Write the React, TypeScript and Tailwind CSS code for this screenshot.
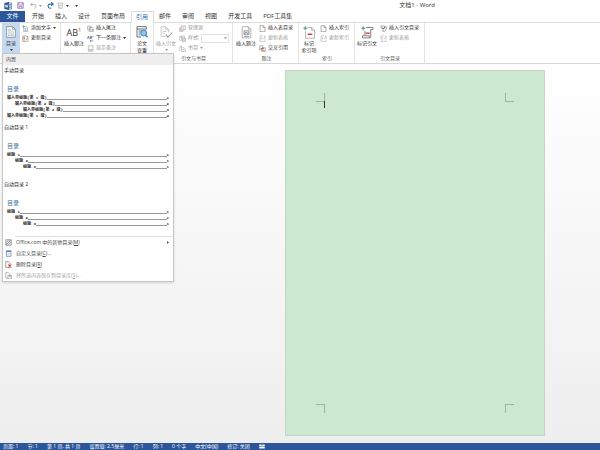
import React from 'react';
import clsx from 'clsx';

type IconName =
  | 'addText'
  | 'refresh'
  | 'endnote'
  | 'nextNote'
  | 'showNotes'
  | 'sources'
  | 'style'
  | 'biblio'
  | 'page'
  | 'pageRefresh'
  | 'crossRef'
  | 'authorities';

const smallIcons: Record<IconName, React.ReactNode> = {
  addText: (
    <>
      <path d="M5 5h8l3 3v11H5z" fill="#fff" stroke="#777" strokeWidth="1.5" />
      <path d="M8 11h5M8 15h5" stroke="#4a7ebb" strokeWidth="2" />
      <path d="M4 1v7M1 4h7" stroke="#5f9f7f" strokeWidth="2" />
    </>
  ),
  refresh: (
    <>
      <path d="M2 3h11l4 4v12H2z" fill="#fff" stroke="#777" strokeWidth="1.5" />
      <path d="M6 5v8M6 16v2" stroke="#d2402f" strokeWidth="3" />
      <path d="M11 15l5-7M13 3l5 3" stroke="#777" strokeWidth="2" />
    </>
  ),
  endnote: (
    <>
      <path d="M2 3h9v11H2zM7 7h8l3 3v9H7z" fill="#fff" stroke="#777" strokeWidth="1.5" />
      <path d="M15 12v5" stroke="#4a7ebb" strokeWidth="2" />
    </>
  ),
  nextNote: (
    <>
      <path d="M1 11L4 3l3 8M2 8h4M9 3v8h3a2 2 0 0 0 0-4H9h2a2 2 0 0 0 0-4z" fill="none" stroke="#555" strokeWidth="1.5" />
      <path d="M17 2v5M9 17h9M12 14l-3 3 3 3" fill="none" stroke="#4a7ebb" strokeWidth="2" />
    </>
  ),
  showNotes: <path d="M4 2h13v16H4zM2 13h15M7 16h7" fill="#fafafa" stroke="#999" strokeWidth="1.5" />,
  sources: (
    <path d="M7 2h11v11H7zM4 5v11h11M2 8v11h10M10 6h5M10 9h5" fill="none" stroke="#999" strokeWidth="1.5" />
  ),
  style: (
    <>
      <path d="M2 3h14v12H2zM2 7h14M7 3v12" fill="none" stroke="#a5a5a5" strokeWidth="1.5" />
      <path d="M10 10h9v9h-9z" fill="#ddd" stroke="#999" strokeWidth="1.5" />
    </>
  ),
  biblio: (
    <path d="M2 18V6l5-4v6M7 8h7l4 4v7H7zM10 13h5" fill="none" stroke="#999" strokeWidth="1.5" />
  ),
  page: <path d="M3 2h9l5 5v12H3zM12 2v5h5" fill="#fff" stroke="#666" strokeWidth="1.5" />,
  pageRefresh: (
    <path d="M3 2h8M3 2v17h14V9M7 5v8M7 16v1M12 12l5-8M14 3l4 1-1 4" fill="none" stroke="#a5a5a5" strokeWidth="1.5" />
  ),
  crossRef: (
    <>
      <path d="M2 2h9v12H2zM8 8h10v11H8z" fill="#fff" stroke="#777" strokeWidth="1.5" />
      <path d="M4 10h8M10 7l3 3-3 3M11 16h5" fill="none" stroke="#c64545" strokeWidth="2" />
    </>
  ),
  authorities: (
    <>
      <path d="M2 3h12v6H4zM14 5h4v6l-5 7H7l3-5" fill="#fff" stroke="#666" strokeWidth="1.5" />
      <path d="M6 8l3 4 5-6" fill="none" stroke="#555" strokeWidth="2" />
    </>
  ),
};

function SmallIcon({ name }: { name: IconName }) {
  return (
    <svg viewBox="0 0 20 20" className="size-[7px] shrink-0">
      {smallIcons[name]}
    </svg>
  );
}

function Caret({ className }: { className?: string }) {
  return (
    <svg viewBox="0 0 6 4" className={clsx('h-[2px] w-[3px] shrink-0 fill-current', className)}>
      <path d="M0 0h6L3 4z" />
    </svg>
  );
}

interface RowProps {
  icon: IconName;
  label: string;
  disabled?: boolean;
  caret?: boolean;
}

function RibbonRow({ icon, label, disabled, caret }: RowProps) {
  return (
    <button disabled={disabled} className="flex h-[10px] items-center gap-[2px] disabled:text-[#999]">
      <SmallIcon name={icon} />
      {label}
      {caret && <Caret />}
    </button>
  );
}

interface BigProps {
  icon: React.ReactNode;
  lines: string[];
  disabled?: boolean;
  caret?: boolean;
  className?: string;
}

function BigButton({ icon, lines, disabled, caret, className }: BigProps) {
  return (
    <button
      disabled={disabled}
      className={clsx('flex h-[31px] shrink-0 flex-col items-center pt-[2px] leading-[7px] disabled:text-[#999]', className)}
    >
      <span className="mb-[1px] flex h-[14px] items-center">{icon}</span>
      {lines.map((line) => (
        <span key={line}>{line}</span>
      ))}
      {caret && <Caret className="mt-[2px]" />}
    </button>
  );
}

interface GroupProps {
  label?: string;
  className: string;
  children: React.ReactNode;
}

function Group({ label, className, children }: GroupProps) {
  return (
    <section className={clsx('flex shrink-0 flex-col border-r border-[#e4e4e4]', className)}>
      <div className="flex h-[31px] items-start gap-[2px]">{children}</div>
      <div className="h-[8px] text-center leading-[8px] text-[#555]">{label}</div>
    </section>
  );
}

const tocIcon = (
  <svg viewBox="0 0 30 36" className="h-[12px] w-[10px]">
    <path d="M2 2h18l8 8v24H2z" fill="#fff" stroke="#777" strokeWidth="2" />
    <path d="M20 2v8h8" fill="none" stroke="#777" strokeWidth="2" />
    <path d="M7 12h9M7 18h4M7 24h4M7 29h4" stroke="#3d78b4" strokeWidth="2" />
    <path d="M13 18h11M13 24h11M13 29h11" stroke="#7ba7a0" strokeWidth="2" />
  </svg>
);

const footnoteIcon = (
  <span className="flex items-start text-[9px] leading-[11px]">
    AB
    <span className="text-[6px] leading-[6px] text-[#d2402f]">1</span>
  </span>
);

const checkIcon = (
  <svg viewBox="0 0 36 36" className="size-[12px]">
    <path d="M3 2h28v8M3 2v31h12M3 9h28M8 15h9M8 21h5M8 27h5" fill="none" stroke="#555" strokeWidth="2.5" />
    <circle cx="23" cy="21" r="9" fill="#8ec5ef" stroke="#2f78bd" strokeWidth="2.5" />
    <path d="M29 28l6 6" stroke="#2f78bd" strokeWidth="4" />
  </svg>
);

const citationIcon = (
  <svg viewBox="0 0 36 36" className="size-[13px]">
    <path d="M3 2h13l8 8v8M3 2v27h13M16 2v8h8M7 15h11M7 20h7" fill="none" stroke="#b5b5b5" strokeWidth="2" />
    <path d="M16 23l6 8L34 18" fill="none" stroke="#999" strokeWidth="3" />
  </svg>
);

const captionIcon = (
  <svg viewBox="0 0 30 36" className="h-[13px] w-[11px]">
    <path d="M3 2h17l7 7v24H3zM20 2v7h7" fill="#fff" stroke="#999" strokeWidth="2" />
    <path d="M8 13h14v11H8z" fill="#dbe6f2" stroke="#888" strokeWidth="2" />
    <path d="M9 23l5-6 4 4 3-2" fill="none" stroke="#666" strokeWidth="2" />
    <path d="M8 29h14" stroke="#4a7ebb" strokeWidth="2" />
  </svg>
);

const markIndexIcon = (
  <svg viewBox="0 0 36 36" className="size-[13px]">
    <path d="M12 4h12l8 8v22H7V15M24 4v8h8" fill="none" stroke="#999" strokeWidth="2" />
    <path d="M13 23h13" stroke="#d2402f" strokeWidth="4" />
    <path d="M6 1v11M1 6h11" stroke="#4f9575" strokeWidth="3" />
  </svg>
);

const markCitationIcon = (
  <svg viewBox="0 0 36 36" className="size-[13px]">
    <path d="M14 4h19v6h-6v17M11 14v12M4 27h19v6H4z" fill="none" stroke="#777" strokeWidth="2.5" />
    <path d="M23 33h4v-7" fill="none" stroke="#777" strokeWidth="2" />
    <path d="M13 20h11" stroke="#d2402f" strokeWidth="4" />
    <path d="M6 1v11M1 6h11" stroke="#4f9575" strokeWidth="3" />
  </svg>
);

function TitleBar() {
  return (
    <header className="flex h-[11px] shrink-0 items-center">
      <div className="flex flex-1 items-center pl-[4px]">
        <svg viewBox="0 0 24 24" className="size-[8px]">
          <path d="M12 3h11v18H12z" fill="#fff" stroke="#2b579a" strokeWidth="2" />
          <path d="M15 8h6M15 12h6M15 16h6" stroke="#2b579a" strokeWidth="2" />
          <path d="M1 3l14-3v24L1 21z" fill="#2b579a" />
          <path d="M4 8l2 8 2-7 2 7 2-8" fill="none" stroke="#fff" strokeWidth="2" />
        </svg>
        <button aria-label="保存" className="ml-[5px]">
          <svg viewBox="0 0 20 20" className="block size-[7px]">
            <path d="M2 2h16v16H2zM5 2v7h10V2M6 18v-5h8v5" fill="none" stroke="#9062a8" strokeWidth="2" />
          </svg>
        </button>
        <button aria-label="撤消" className="ml-[6px] flex items-center gap-[2px] text-[#999]">
          <svg viewBox="0 0 20 20" className="size-[7px]">
            <path d="M7 2L2 7l5 5M2 7h10c7 0 7 9 0 11" fill="none" stroke="#999" strokeWidth="2" />
          </svg>
          <Caret />
        </button>
        <button aria-label="恢复" className="ml-[5px]">
          <svg viewBox="0 0 20 20" className="block size-[7px]">
            <path d="M12 1l6 5-6 5M17 6H9c-8 0-8 11 0 12h3" fill="none" stroke="#2f6db0" strokeWidth="3" />
          </svg>
        </button>
        <button aria-label="触摸模式" className="ml-[3px] flex items-center gap-[2px]">
          <svg viewBox="0 0 20 20" className="size-[7px]">
            <path d="M3 3h13v6H3zM5 9v9h10V9M8 12v6" fill="none" stroke="#aaa" strokeWidth="2" />
          </svg>
          <Caret />
        </button>
        <button aria-label="自定义" className="ml-[6px]">
          <Caret />
        </button>
      </div>
      <h1 className="mr-[165px] text-[6px] leading-[11px]">文档1 - Word</h1>
    </header>
  );
}

const tabs = ['开始', '插入', '设计', '页面布局', '引用', '邮件', '审阅', '视图', '开发工具', 'PDF工具集'];

function Tabs() {
  return (
    <nav className="flex h-[12px] shrink-0 border-b border-[#dcdcdc] text-[6px] leading-[11px]">
      <button className="w-[25px] bg-[#2b579a] text-white">文件</button>
      <div className="ml-[2px] flex">
        {tabs.map((tab) => (
          <button
            key={tab}
            className={clsx(
              'border-x pr-[5px] pl-[4px]',
              tab === '引用' ? 'h-[12px] border-t border-[#dcdcdc] bg-white text-[#2b6cb5]' : 'border-transparent'
            )}
          >
            {tab}
          </button>
        ))}
      </div>
    </nav>
  );
}

interface TocLine {
  text: string;
  page: number;
  level: number;
}

const manualLines: TocLine[] = [
  { text: '键入章标题(第 1 级)', page: 1, level: 1 },
  { text: '键入章标题(第 2 级)', page: 2, level: 2 },
  { text: '键入章标题(第 3 级)', page: 3, level: 3 },
  { text: '键入章标题(第 1 级)', page: 4, level: 1 },
];

const autoLines: TocLine[] = [
  { text: '标题 1', page: 1, level: 1 },
  { text: '标题 2', page: 1, level: 2 },
  { text: '标题 3', page: 1, level: 3 },
];

const gallery = [
  { name: '手动目录', lines: manualLines },
  { name: '自动目录 1', lines: autoLines },
  { name: '自动目录 2', lines: autoLines },
];

function GalleryItem({ name, lines }: (typeof gallery)[number]) {
  return (
    <button className="flex h-[57px] w-full flex-col items-stretch text-left">
      <span className="pl-[1px] leading-[10px] text-[#222]">{name}</span>
      <span className="mt-[9px] pl-[4px] text-[6px] leading-[11px] text-[#3d6f9e]">目录</span>
      {lines.map((line, i) => (
        <span
          key={i}
          className={clsx(
            'flex h-[6px] items-center pr-[4px] font-["Liberation_Mono","Noto_Sans_CJK_SC",monospace] text-[4px] leading-[6px] font-bold text-[#222]',
            line.level === 1 && 'pl-[4px]',
            line.level === 2 && 'pl-[12px]',
            line.level === 3 && 'pl-[20px]'
          )}
        >
          {line.text}
          <span className="mt-[2px] flex-1 border-b border-[#999]" />
          {line.page}
        </span>
      ))}
    </button>
  );
}

interface MenuItemProps {
  icon: React.ReactNode;
  text: string;
  accel: string;
  rest?: string;
  disabled?: boolean;
  arrow?: boolean;
}

function MenuItem({ icon, text, accel, rest, disabled, arrow }: MenuItemProps) {
  return (
    <button disabled={disabled} className="flex h-[11px] w-full items-center pr-[4px] pl-[2px] text-[#444] disabled:text-[#a5a5a5]">
      <svg viewBox="0 0 20 20" className="mr-[4px] size-[7px]">{icon}</svg>
      <span>
        {text}(<u>{accel}</u>){rest}
      </span>
      {arrow && (
        <svg viewBox="0 0 4 6" className="ml-auto h-[3px] w-[2px] fill-[#555]">
          <path d="M0 0v6l4-3z" />
        </svg>
      )}
    </button>
  );
}

function TocMenu() {
  return (
    <div className="absolute top-[53px] left-[2px] z-10 w-[172px] border border-[#c6c6c6] bg-white shadow-sm">
      <div className="bg-[#eeeeee] pl-[3px] leading-[11px] text-[#444]">内置</div>
      {gallery.map((item) => (
        <GalleryItem key={item.name} {...item} />
      ))}
      <div className="ml-[12px] border-t border-[#e1e1e1]" />
      <MenuItem
        text="Office.com 中的其他目录"
        accel="M"
        arrow
        icon={
          <>
            <path d="M2 2h16v16H2z" fill="#eef2f6" stroke="#888" strokeWidth="2" />
            <circle cx="10" cy="10" r="5" fill="none" stroke="#5b8fc4" strokeWidth="2" />
            <path d="M3 17L17 3" stroke="#c76b5b" strokeWidth="2" />
          </>
        }
      />
      <MenuItem
        text="自定义目录"
        accel="C"
        rest="..."
        icon={
          <>
            <path d="M4 2h13v16H4z" fill="#fff" stroke="#4a7ebb" strokeWidth="2" />
            <path d="M4 4h13" stroke="#4a7ebb" strokeWidth="3" />
            <path d="M7 9h7M7 13h7" stroke="#999" strokeWidth="1" />
          </>
        }
      />
      <MenuItem
        text="删除目录"
        accel="R"
        icon={
          <>
            <path d="M2 2h8l4 4v12H2z" fill="#fff" stroke="#777" strokeWidth="2" />
            <path d="M9 10l9 9M18 10l-9 9" stroke="#d2402f" strokeWidth="3" />
          </>
        }
      />
      <MenuItem
        text="将所选内容保存到目录库"
        accel="S"
        rest="..."
        disabled
        icon={<path d="M2 2h8l4 4v3M2 2v15h5M8 10h11v9H8zM11 10v3h5v-3" fill="none" stroke="#999" strokeWidth="2" />}
      />
    </div>
  );
}

function Ribbon() {
  return (
    <div className="flex h-[41px] shrink-0 border-b border-[#d8d8d8]">
      <Group className="w-[61px] pl-[2px]">
        <BigButton icon={tocIcon} lines={['目录']} caret className="w-[18px] bg-[#c5d9f1]" />
        <div>
          <RibbonRow icon="addText" label="添加文字" caret />
          <RibbonRow icon="refresh" label="更新目录" />
        </div>
      </Group>
      <Group className="w-[70px] pl-[2px]">
        <BigButton icon={footnoteIcon} lines={['插入脚注']} className="w-[22px]" />
        <div>
          <RibbonRow icon="endnote" label="插入尾注" />
          <RibbonRow icon="nextNote" label="下一条脚注" caret />
          <RibbonRow icon="showNotes" label="显示备注" disabled />
        </div>
      </Group>
      <Group className="w-[23px] items-center">
        <BigButton icon={checkIcon} lines={['论文', '查重']} />
      </Group>
      <Group label="引文与书目" className="w-[79px] pl-[1px]">
        <BigButton icon={citationIcon} lines={['插入引文']} caret disabled className="w-[22px]" />
        <div>
          <RibbonRow icon="sources" label="管理源" disabled />
          <label className="flex h-[10px] items-center gap-[2px] text-[#999]">
            <SmallIcon name="style" />
            样式:
            <span className="relative flex items-center">
              <select disabled className="h-[9px] w-[28px] appearance-none border border-[#e2e2e2] bg-white" />
              <Caret className="absolute right-[2px]" />
            </span>
          </label>
          <RibbonRow icon="biblio" label="书目" disabled caret />
        </div>
      </Group>
      <Group label="题注" className="w-[66px] pl-[2px]">
        <BigButton icon={captionIcon} lines={['插入题注']} className="w-[22px]" />
        <div>
          <RibbonRow icon="page" label="插入表目录" />
          <RibbonRow icon="pageRefresh" label="更新表格" disabled />
          <RibbonRow icon="crossRef" label="交叉引用" />
        </div>
      </Group>
      <Group label="索引" className="w-[56px] pl-[1px]">
        <BigButton icon={markIndexIcon} lines={['标记', '索引项']} className="w-[18px]" />
        <div>
          <RibbonRow icon="page" label="插入索引" />
          <RibbonRow icon="pageRefresh" label="更新索引" disabled />
        </div>
      </Group>
      <Group label="引文目录" className="w-[70px] pl-[1px]">
        <BigButton icon={markCitationIcon} lines={['标记引文']} className="w-[22px]" />
        <div>
          <RibbonRow icon="authorities" label="插入引文目录" />
          <RibbonRow icon="pageRefresh" label="更新表格" disabled />
        </div>
      </Group>
    </div>
  );
}

function Document() {
  return (
    <main className="flex min-h-0 flex-1 bg-linear-to-b from-white to-[#eeeeee] pt-[6px] pr-[55px] pb-[7px]">
      <article className="ml-auto flex w-[260px] flex-col justify-between border border-[#c3d6c6] bg-[#cce8cf] px-[30px] py-[22px]">
        <div className="flex justify-between">
          <span className="relative size-[9px] border-r border-b border-[#9db5a0]">
            <span className="absolute top-[8px] left-[8px] h-[7px] w-px bg-[#333]" />
          </span>
          <span className="size-[9px] border-b border-l border-[#9db5a0]" />
        </div>
        <div className="flex justify-between">
          <span className="size-[9px] border-t border-r border-[#9db5a0]" />
          <span className="size-[9px] border-t border-l border-[#9db5a0]" />
        </div>
      </article>
    </main>
  );
}

const status = ['页面: 1', '节: 1', '第 1 页, 共 1 页', '设置值: 2.5厘米', '行: 1', '列: 1', '0 个字', '中文(中国)', '修订: 关闭'];

function StatusBar() {
  return (
    <footer className="flex h-[7px] shrink-0 items-center gap-[9px] bg-[#2b579a] pl-[3px] leading-[7px] text-white">
      {status.map((item) => (
        <span key={item}>{item}</span>
      ))}
      <svg viewBox="0 0 20 16" className="h-[5px] w-[6px]">
        <path d="M1 1h8v5H1zM11 1h8v5h-8zM1 8h18v7H1z" fill="#fff" />
      </svg>
    </footer>
  );
}

export default function App() {
  return (
    <div className='relative flex h-screen flex-col overflow-hidden bg-white font-["Open_Sans","Noto_Sans_CJK_SC",sans-serif] text-[5px] whitespace-nowrap text-[#333]'>
      <TitleBar />
      <Tabs />
      <Ribbon />
      <TocMenu />
      <Document />
      <StatusBar />
    </div>
  );
}
